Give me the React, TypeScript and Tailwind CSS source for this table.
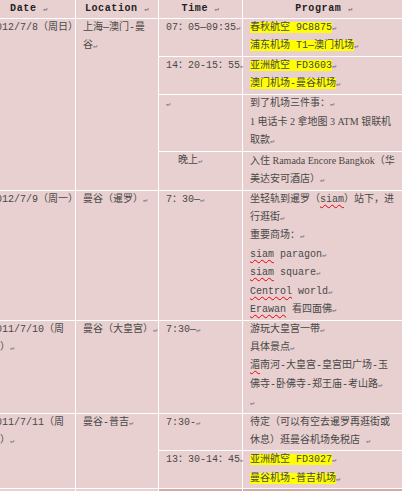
import React from "react";

const Mark = () => (
  <span className="text-[7px] text-gray-500 align-baseline">↵</span>
);

const HL = ({ children }: { children: React.ReactNode }) => (
  <span className="bg-[#ffff00]">{children}</span>
);

const Sq = ({ children }: { children: React.ReactNode }) => (
  <span className="underline decoration-wavy decoration-red-600 decoration-1 underline-offset-2">
    {children}
  </span>
);

const Serif = ({ children }: { children: React.ReactNode }) => (
  <span className="font-['Liberation_Serif','Noto_Sans_CJK_SC',serif]">{children}</span>
);

function Cell({
  className = "",
  lines,
}: {
  className?: string;
  lines: React.ReactNode[];
}) {
  return (
    <div className={`bg-[#e9d0d0] px-[7px] leading-[18.4px] ${className}`}>
      {lines.map((l, i) => (
        <div key={i} className="whitespace-nowrap">
          {l}
        </div>
      ))}
    </div>
  );
}

function Head({ label }: { label: string }) {
  return (
    <div className="bg-[#e9d0d0] h-[18px] leading-[18px] text-center font-bold text-[10px] tracking-[0.6px] text-[#222]">
      {label} <Mark />
    </div>
  );
}

export default function App() {
  return (
    <div className="w-[402px] h-[491px] overflow-hidden bg-white">
      <div className="-ml-[17px] w-max grid grid-cols-[92px_82px_83px_162px] gap-px bg-white text-[10px] text-[#484848] font-['Liberation_Mono','Noto_Sans_CJK_SC',monospace]">
        <Head label="Date" />
        <Head label="Location" />
        <Head label="Time" />
        <Head label="Program" />

        {/* 2012/7/8 */}
        <Cell className="row-span-4" lines={[<>2012/7/8（周日）<Mark /></>]} />
        <Cell className="row-span-4" lines={["上海—澳门-曼", <>谷<Mark /></>]} />
        <Cell lines={[<>07：05—09:35<Mark /></>]} />
        <Cell
          lines={[
            <><HL>春秋航空 9C8875</HL><Mark /></>,
            <><HL>浦东机场 T1—澳门机场</HL><Mark /></>,
          ]}
        />
        <Cell lines={[<>14：20-15：55<Mark /></>]} />
        <Cell
          lines={[
            <><HL>亚洲航空 FD3603</HL><Mark /></>,
            <><HL>澳门机场-曼谷机场</HL><Mark /></>,
          ]}
        />
        <Cell lines={[<Mark />]} />
        <Cell
          lines={[
            <>到了机场三件事：<Mark /></>,
            <>
              <Serif>1 </Serif>电话卡<Serif> 2 </Serif>拿地图<Serif> 3 ATM </Serif>银联机
            </>,
            <>取款<Mark /></>,
          ]}
        />
        <Cell className="pl-[19px]" lines={[<>晚上<Mark /></>]} />
        <Cell
          lines={[
            <>入住<Serif> Ramada Encore Bangkok</Serif>（华</>,
            <>美达安可酒店）<Mark /></>,
          ]}
        />

        {/* 2012/7/9 */}
        <Cell lines={[<>2012/7/9（周一）<Mark /></>]} />
        <Cell lines={[<>曼谷（暹罗）<Mark /></>]} />
        <Cell lines={[<>7：30—<Mark /></>]} />
        <Cell
          lines={[
            <>坐轻轨到暹罗（<Sq>siam</Sq>）站下，进</>,
            <>行逛街<Mark /></>,
            <>重要商场：<Mark /></>,
            <><Sq>siam</Sq> paragon<Mark /></>,
            <><Sq>siam</Sq> square<Mark /></>,
            <><Sq>Centrol</Sq> world<Mark /></>,
            <><Sq>Erawan</Sq> 看四面佛<Mark /></>,
          ]}
        />

        {/* 2011/7/10 */}
        <Cell lines={["2011/7/10（周", <>一）<Mark /></>]} />
        <Cell lines={[<>曼谷（大皇宫）<Mark /></>]} />
        <Cell lines={[<>7:30—<Mark /></>]} />
        <Cell
          lines={[
            <>游玩大皇宫一带<Mark /></>,
            <>具体景点<Mark /></>,
            <><Sq>湄</Sq>南河-大皇宫-皇宫田广场-玉</>,
            <>佛寺-卧佛寺-郑王庙-考山路<Mark /></>,
            <Mark />,
          ]}
        />

        {/* 2011/7/11 */}
        <Cell className="row-span-2" lines={["2011/7/11（周", <>一）<Mark /></>]} />
        <Cell className="row-span-2" lines={[<>曼谷-普吉<Mark /></>]} />
        <Cell lines={[<>7:30-<Mark /></>]} />
        <Cell
          lines={[
            "待定（可以有空去暹罗再逛街或",
            <>休息）逛曼谷机场免税店 <Mark /></>,
          ]}
        />
        <Cell lines={[<>13：30-14：45<Mark /></>]} />
        <Cell
          lines={[
            <><HL>亚洲航空 FD3027</HL><Mark /></>,
            <><HL>曼谷机场-普吉机场</HL><Mark /></>,
          ]}
        />

        {/* next row, cut off */}
        <div className="bg-[#e9d0d0] h-[18px]" />
        <div className="bg-[#e9d0d0] h-[18px]" />
        <div className="bg-[#d6a9a9] h-[18px]" />
        <div className="bg-[#d6a9a9] h-[18px]" />
      </div>
    </div>
  );
}
